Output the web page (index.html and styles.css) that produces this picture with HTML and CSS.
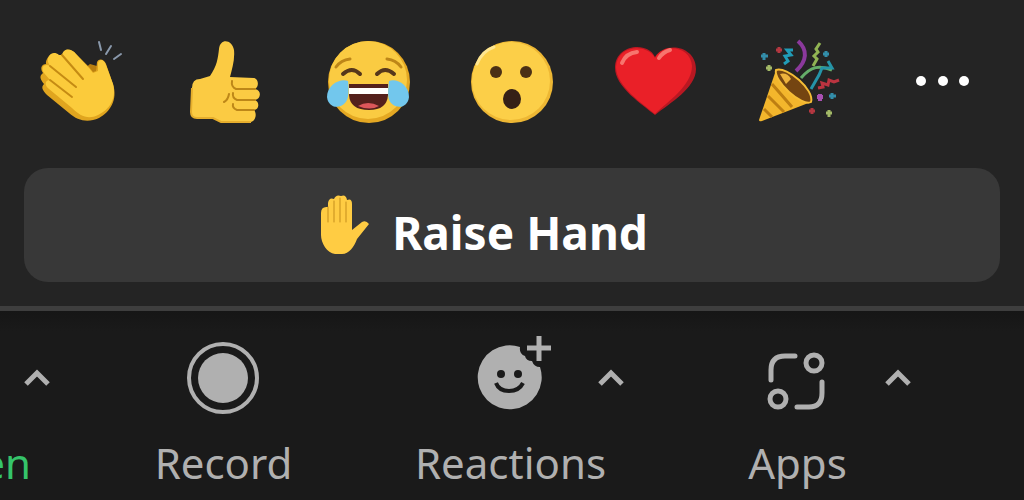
FILE: index.html
```
<!DOCTYPE html>
<html lang="en">
<head>
    <meta charset="UTF-8">
    <meta name="viewport" content="width=device-width, initial-scale=1.0">
    <title>Reactions</title>
    <link rel="stylesheet" href="styles.css">
</head>
<body>

    <!-- reactions panel -->
    <section class="panel">
        <div class="emoji-row">
            <button class="emoji-btn" aria-label="Clap">
                <svg viewBox="0 0 100 100">
                    <path d="M53 40 L60 34 67 36 66 48Z" fill="#b97f10"/>
                    <path d="M32 26 C34 17 42 19 46 24 L59 37 63 42 66 41 67 32 C69 28 74 29 76 34 L83 54 C88 70 80 82 69 88 C58 93 48 91 39 83 L17 65 C12 60 11 57 14 54 C10 49 9 46 13 43 C9 37 13 34 16 34 C15 28 23 20 28 25Z" fill="#e0a51f"/>
                    <path d="M32 25 C34 17 42 19 46 24 L59 38 63 43 68 41 68 33 C70 28 74 30 76 35 L83 54 C87 69 79 80 68 85 C58 90 50 86 42 78 L19 59 C14 55 15 50 20 50 L14 43 C10 37 15 33 20 36 L18 32 C17 25 23 20 29 25Z" fill="#fbcb3b"/>
                    <path d="M32 25 L53 49 M20 36 L46 57 M20 50 L42 67" fill="none" stroke="#c58b13" stroke-width="2" stroke-linecap="round"/>
                    <path d="M69 12 L71 20 M81 16 L76 24 M91 24 L84 29" fill="none" stroke="#8a99ac" stroke-width="2" stroke-linecap="round"/>
                </svg>
            </button>
            <button class="emoji-btn" aria-label="Thumbs up">
                <svg viewBox="-1 0 100 100">
                    <path d="M17 58 Q17 49 25 49 L35 46 C42 36 43 28 44 19 C45 8 57 9 59 20 C60 30 57 39 55 47 L79 48 C84 49 84 57 80 59 C87 60 86 69 80 70 C85 72 84 80 79 80 C82 83 81 91 76 92 L46 92 38 88 22 88 Q16 87 16 82Z" fill="#fbcb43"/>
                    <path d="M17 58 L16 82 Q16 88 22 88 L38 88 46 92 76 92" fill="none" stroke="#e6ae2d" stroke-width="2"/>
                    <path d="M80 59 H61 Q56 57 57 51 M80 70 H62 Q57 68 58 63 M79 80 H62 Q57 78 58 74 M54 64 Q53 70 49 72" fill="none" stroke="#bd8718" stroke-width="2" stroke-linecap="round"/>
                </svg>
            </button>
            <button class="emoji-btn" aria-label="Joy">
                <svg viewBox="0 0 100 100">
                    <circle cx="51" cy="52" r="41" fill="#e4a823"/>
                    <circle cx="50" cy="50" r="39" fill="#facb42"/>
                    <path d="M18 37 Q23 30 32 29 M69 29 Q78 30 83 37" fill="none" stroke="#bd8618" stroke-width="3" stroke-linecap="round"/>
                    <path d="M25 44 Q34 36 42 44 M59 44 Q67 36 76 44" fill="none" stroke="#56371b" stroke-width="4" stroke-linecap="round"/>
                    <path d="M31 54 H70 V65 Q69 80 51 80 Q32 80 31 65Z" fill="#54201c"/>
                    <path d="M31 58 H70 V64 H31Z" fill="#fff"/>
                    <path d="M40 76 Q50 70 61 76 Q52 81 40 76Z" fill="#dc565a"/>
                    <path d="M30 51 C22 48 9 55 9 67 C10 77 20 80 27 73 C31 69 31 60 30 51Z" fill="#72c7ed"/>
                    <path d="M71 51 C79 48 91 55 91 67 C90 77 80 80 73 73 C69 69 70 60 71 51Z" fill="#72c7ed"/>
                </svg>
            </button>
            <button class="emoji-btn" aria-label="Open mouth">
                <svg viewBox="2 0 100 100">
                    <circle cx="52" cy="52" r="41" fill="#edb734"/>
                    <circle cx="51" cy="51" r="39" fill="#fccf48"/>
                    <path d="M17 34 Q22 21 34 17" fill="none" stroke="#ffe690" stroke-width="3" stroke-linecap="round"/>
                    <circle cx="36" cy="42" r="6" fill="#4b3015"/>
                    <circle cx="66" cy="42" r="6" fill="#4b3015"/>
                    <ellipse cx="52" cy="69" rx="9" ry="10" fill="#352016"/>
                </svg>
            </button>
            <button class="emoji-btn" aria-label="Heart">
                <svg viewBox="1 0 100 100">
                    <path d="M50 85 C38 75 10 57 10 38 C10 14 43 11 50 27 C59 11 91 15 91 39 C91 58 65 73 50 85Z" fill="#b91822"/>
                    <path d="M50 84 C38 74 11 56 11 37 C12 15 42 13 50 28 C58 12 86 16 87 36 C87 56 62 72 50 84Z" fill="#ea2028"/>
                    <path d="M17 33 Q21 23 32 22 M54 28 Q58 22 65 20" fill="none" stroke="#f7756e" stroke-width="4" stroke-linecap="round"/>
                </svg>
            </button>
            <button class="emoji-btn" aria-label="Party popper">
                <svg viewBox="0 0 100 100">
                    <path d="M26 40 L9 90 Q9 92 12 91 L61 72Z" fill="#f3b62c"/>
                    <path d="M22 54 L42 77 M18 66 L34 82 M14 79 L22 87" stroke="#bd7e12" stroke-width="3"/>
                    <path d="M26 40 C37 36 65 60 61 72 C52 77 23 51 26 40Z" fill="#744511" stroke="#f5bd36" stroke-width="2"/>
                    <path d="M30 44 Q37 42 41 49 L36 54Z" fill="#eeb33d"/>
                    <path d="M48 11 C58 20 57 31 46 41" fill="none" stroke="#8b399c" stroke-width="4"/>
                    <path d="M70 13 L66 19 68 22 64 26 67 29 63 36" fill="none" stroke="#91b453" stroke-width="3"/>
                    <path d="M43 20 L37 20 41 25 35 26 38 31 34 34" fill="none" stroke="#219cb7" stroke-width="3"/>
                    <path d="M51 48 C61 36 70 35 82 40" fill="none" stroke="#65ae69" stroke-width="3"/>
                    <path d="M78 31 L82 38 72 38 69 45 61 59" fill="none" stroke="#2594a8" stroke-width="3"/>
                    <path d="M68 58 L73 57 72 53 78 55 79 50 84 52 89 50" fill="none" stroke="#bb3440" stroke-width="3"/>
                    <path d="M14 23 V30 M11 26 H18 M76 21 V27 M73 24 H79 M82 63 V69 M79 66 H86" stroke="#338eaa" stroke-width="3"/>
                    <path d="M29 17 V23 M26 20 H32 M62 78 V84 M59 81 H65" stroke="#b43740" stroke-width="3"/>
                    <path d="M19 35 V41 M16 38 H22 M79 80 V87 M76 83 H82" stroke="#a3b967" stroke-width="3"/>
                    <path d="M70 64 V71 M67 67 H73" stroke="#a850b2" stroke-width="4"/>
                </svg>
            </button>
            <button class="emoji-btn" aria-label="More reactions">
                <svg viewBox="0 0 100 100" fill="#fff">
                    <circle cx="27" cy="51" r="5"/>
                    <circle cx="49" cy="51" r="5"/>
                    <circle cx="70" cy="51" r="5"/>
                </svg>
            </button>
        </div>

        <button class="raise-btn">
            <svg class="hand" viewBox="0 0 50 62">
                <path d="M1 19 Q1 12 8 13 V9 Q9 3 14 5 Q16 0 21 2 Q26 0 27 6 Q32 4 32 10 V36 L42 28 Q46 26 49 30 L37 45 C34 53 29 60 22 60 H15 C7 59 1 49 1 41Z" fill="#ffcc43"/>
                <path d="M8 13 V28 M14 7 V28 M20 4 V28 M26 8 V28" stroke="#c58e1d" stroke-width="1" stroke-linecap="round"/>
            </svg>
            <span>Raise Hand</span>
        </button>
    </section>

    <!-- bottom toolbar -->
    <nav class="toolbar">
        <div class="tool share">
            <button class="tool-btn">
                <span class="tool-icon"></span>
                <span>en</span>
            </button>
            <button class="arrow" aria-label="Share options">
                <svg viewBox="0 0 26 18"><path d="M2 15 L13 4 24 15"/></svg>
            </button>
        </div>
        <div class="tool">
            <button class="tool-btn">
                <svg class="tool-icon" viewBox="1 0 100 90">
                    <circle cx="50" cy="45" r="34" fill="none" stroke="#b0b0b0" stroke-width="4"/>
                    <circle cx="50" cy="45" r="25" fill="#b0b0b0"/>
                </svg>
                <span>Record</span>
            </button>
        </div>
        <div class="tool">
            <button class="tool-btn">
                <svg class="tool-icon" viewBox="2 0 100 90">
                    <path d="M61 14 A32 32 0 1 0 81 34 Q75 34 73 28 Q67 28 66 23 Q60 21 61 14Z" fill="#b0b0b0"/>
                    <path d="M80 3 V28 M68 15 H92" stroke="#b0b0b0" stroke-width="5"/>
                    <circle cx="42" cy="41" r="4" fill="#1a1a1a"/>
                    <circle cx="59" cy="41" r="4" fill="#1a1a1a"/>
                    <path d="M37 50 Q40 58 50 58 Q60 58 64 50" fill="none" stroke="#1a1a1a" stroke-width="4"/>
                </svg>
                <span>Reactions</span>
            </button>
            <button class="arrow" aria-label="Reaction options">
                <svg viewBox="0 0 26 18"><path d="M2 15 L13 4 24 15"/></svg>
            </button>
        </div>
        <div class="tool">
            <button class="tool-btn">
                <svg class="tool-icon" viewBox="2 0 100 90" fill="none" stroke="#b0b0b0" stroke-width="5" stroke-linecap="round">
                    <path d="M25 47 V37 Q25 23 39 23 H49"/>
                    <path d="M76 49 V60 Q76 74 63 74 H51"/>
                    <circle cx="68" cy="30" r="8"/>
                    <circle cx="32" cy="66" r="8"/>
                </svg>
                <span>Apps</span>
            </button>
            <button class="arrow" aria-label="App options">
                <svg viewBox="0 0 26 18"><path d="M2 15 L13 4 24 15"/></svg>
            </button>
        </div>
    </nav>

</body>
</html>
```
FILE: styles.css
```
* {
    box-sizing: border-box;
}

body {
    margin: 0;
    min-height: 100vh;
    display: flex;
    flex-direction: column;
    background: #1a1a1a;
    font-family: "Noto Sans", "Open Sans", sans-serif;
    overflow-x: hidden;
}

button {
    padding: 0;
    border: none;
    background: none;
    color: inherit;
    font: inherit;
    cursor: pointer;
}

svg {
    display: block;
}

.panel {
    padding: 30px 24px 24px;
    background: #242424;
    border-bottom: 5px solid #3e3e3e;
}

.emoji-row {
    display: grid;
    grid-template-columns: repeat(7, 1fr);
    margin: 0 -16px 38px;
}

.emoji-btn {
    display: flex;
    justify-content: center;
}

.emoji-btn svg {
    width: 100px;
    height: 100px;
}

.raise-btn {
    display: flex;
    justify-content: center;
    align-items: center;
    gap: 22px;
    width: 100%;
    height: 114px;
    padding-right: 56px;
    border-radius: 24px;
    background: #383838;
    color: #fff;
    font-size: 46px;
    font-weight: bold;
    line-height: 64px;
}

.hand {
    width: 50px;
    height: 62px;
}

.raise-btn span {
    padding-top: 14px;
}

.toolbar {
    flex: 1;
    display: grid;
    grid-template-columns: 80fr 287fr 287fr 287fr 83fr;
    padding-top: 22px;
    background: linear-gradient(#161616, #1a1a1a 20px);
}

.tool {
    display: grid;
    grid-template-columns: 1fr 56px;
    grid-template-rows: 90px auto;
    min-width: 0;
}

.tool-btn {
    grid-area: 1 / 1 / 3 / 3;
    display: flex;
    flex-direction: column;
    align-items: center;
    gap: 10px;
    color: #b0b0b0;
    font-size: 42px;
    line-height: 60px;
}

.tool-icon {
    width: 100px;
    height: 90px;
}

.arrow {
    grid-area: 1 / 2;
    justify-self: start;
    align-self: center;
}

.arrow svg {
    width: 26px;
    height: 18px;
    fill: none;
    stroke: #b0b0b0;
    stroke-width: 5px;
}

/* the share tool runs off the left edge */
.share {
    overflow: hidden;
}

.share .tool-btn {
    align-items: flex-end;
    padding-right: 49px;
    color: #35c46a;
}
```
